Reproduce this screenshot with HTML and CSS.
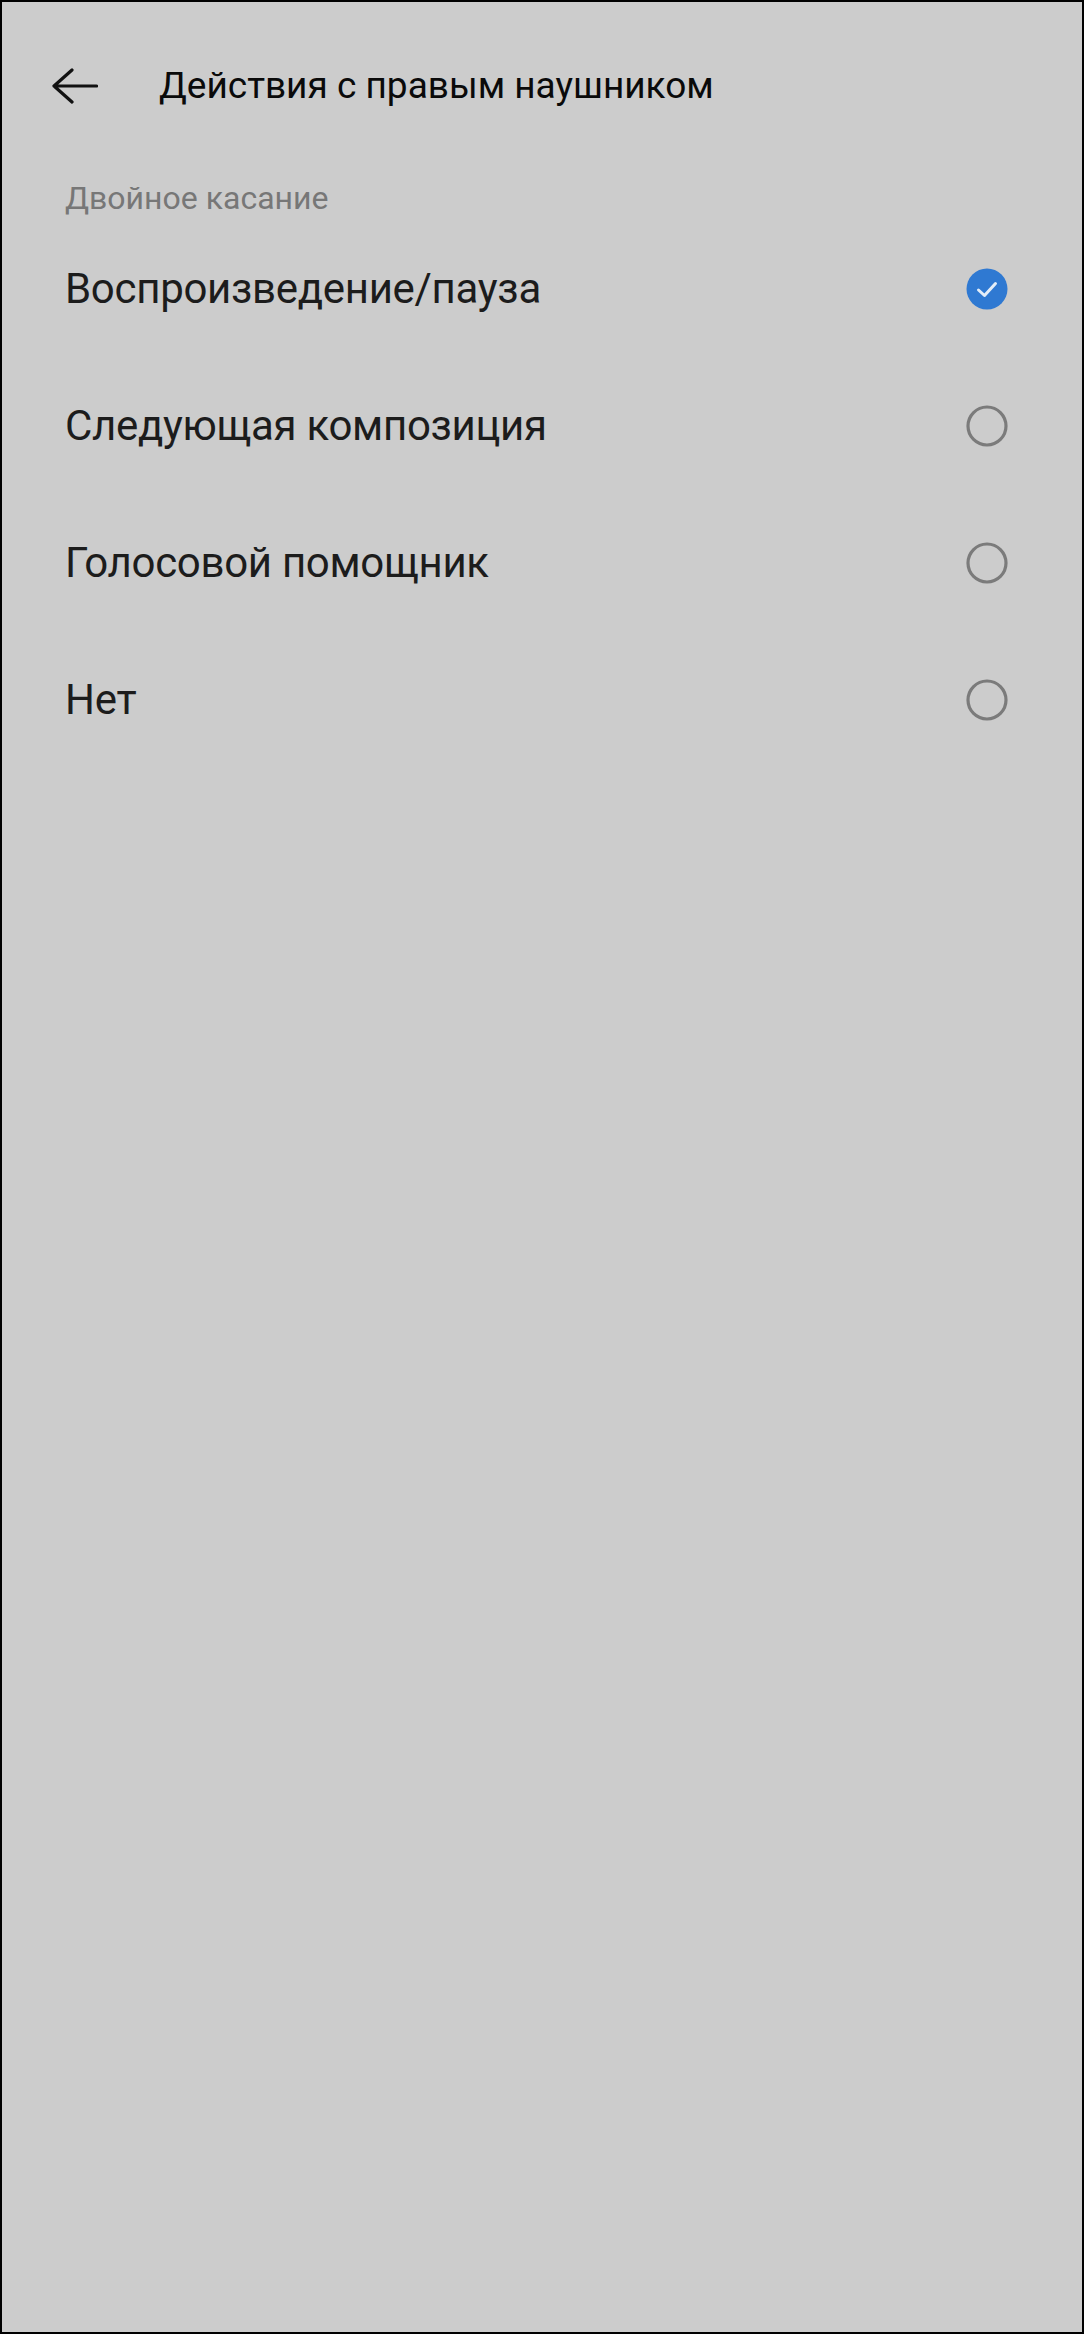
FILE: index.html
```html
<!DOCTYPE html>
<html lang="ru">
<head>
<meta charset="utf-8">
<title>Действия с правым наушником</title>
<link rel="stylesheet" href="styles.css">
</head>
<body>
<div class="screen">
  <header class="appbar">
    <svg class="back" width="46" height="36" viewBox="0 0 46 36" aria-hidden="true">
      <path d="M44.5 18 H2 M20 2 L2 18 L20 34" fill="none" stroke="#111" stroke-width="3.2" stroke-linecap="round" stroke-linejoin="round"/>
    </svg>
    <h1 class="title">Действия с правым наушником</h1>
  </header>
  <div class="section-label">Двойное касание</div>
  <ul class="options">
    <li class="option">
      <span class="option-text">Воспроизведение/пауза</span>
      <svg class="radio" width="42" height="42" viewBox="0 0 42 42" aria-hidden="true">
        <circle cx="21" cy="21" r="20.5" fill="#2f79d2"/>
        <path d="M12.5 22 L18.5 27.5 L29.5 15.5" fill="none" stroke="#e3edf8" stroke-width="3" stroke-linecap="round" stroke-linejoin="round"/>
      </svg>
    </li>
    <li class="option">
      <span class="option-text">Следующая композиция</span>
      <svg class="radio" width="42" height="42" viewBox="0 0 42 42" aria-hidden="true">
        <circle cx="21" cy="21" r="19" fill="none" stroke="#7b7b7b" stroke-width="3.2"/>
      </svg>
    </li>
    <li class="option">
      <span class="option-text">Голосовой помощник</span>
      <svg class="radio" width="42" height="42" viewBox="0 0 42 42" aria-hidden="true">
        <circle cx="21" cy="21" r="19" fill="none" stroke="#7b7b7b" stroke-width="3.2"/>
      </svg>
    </li>
    <li class="option">
      <span class="option-text">Нет</span>
      <svg class="radio" width="42" height="42" viewBox="0 0 42 42" aria-hidden="true">
        <circle cx="21" cy="21" r="19" fill="none" stroke="#7b7b7b" stroke-width="3.2"/>
      </svg>
    </li>
  </ul>
</div>
</body>
</html>
```

FILE: styles.css
```css
html, body {
  margin: 0;
  padding: 0;
  background: #000;
}

.screen {
  width: 1084px;
  height: 2334px;
  box-sizing: border-box;
  border: 2px solid #000;
  background: #cccccc;
  font-family: Roboto, "Noto Sans", sans-serif;
  color: #1c1c1c;
}

.appbar {
  height: 168px;
  display: flex;
  align-items: center;
  padding-left: 50px;
}

.back {
  display: block;
  flex: none;
}

.title {
  margin: 0 0 0 61px;
  font-size: 37px;
  font-weight: 400;
  color: #0a0a0a;
  line-height: 44px;
}

.section-label {
  margin-top: 6px;
  padding-left: 63px;
  height: 44px;
  line-height: 44px;
  font-size: 32px;
  color: #777777;
}

.options {
  list-style: none;
  margin: 0;
  padding: 0;
}

.option {
  height: 137px;
  display: flex;
  align-items: center;
  justify-content: space-between;
  padding: 0 74px 0 63px;
}

.option-text {
  font-size: 42px;
  letter-spacing: -0.3px;
  line-height: 56px;
  color: #1c1c1c;
}

.radio {
  display: block;
  flex: none;
}
```
